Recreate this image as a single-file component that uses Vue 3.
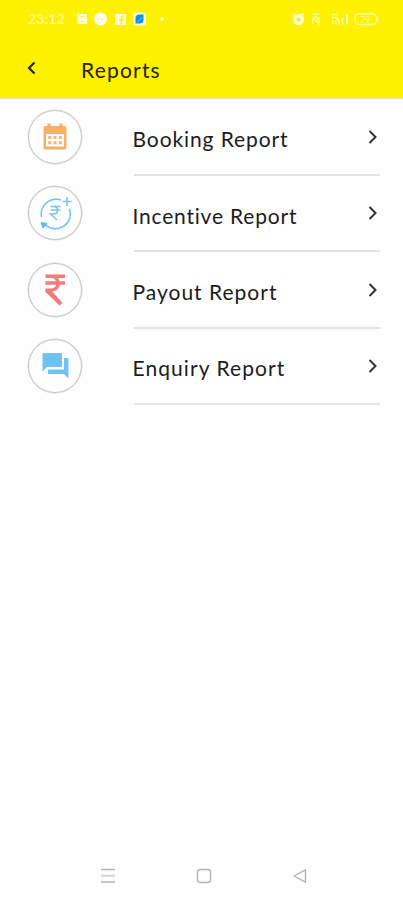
<script setup>
const reports = [
  { label: 'Booking Report', icon: 'calendar', spacing: '0.9px' },
  { label: 'Incentive Report', icon: 'incentive', spacing: '0.8px' },
  { label: 'Payout Report', icon: 'rupee', spacing: '1px' },
  { label: 'Enquiry Report', icon: 'chat', spacing: '1.08px' },
]
</script>

<template>
  <div class="screen">
    <header class="top">
      <div class="status">
        <span class="time">23:12</span>
        <div class="left-icons">
          <svg width="90" height="16" viewBox="0 0 90 16">
            <path d="M1 3h10v10H1z" fill="#fffde0" />
            <path d="M3 5.5h6M4 8h1.500M7 8h1.500M5 10.500h3" stroke="#fff05a" stroke-width="1.200" />
            <circle cx="24.500" cy="8" r="6.500" fill="#fffef0" />
            <path d="M21.500 8h1.500M25.500 8h1.500" stroke="#ffed62" stroke-width="1.500" />
            <rect x="39" y="3" width="11" height="11" rx="1.500" fill="#fffde0" />
            <path d="M45.500 14V6.500q0-1.500 2-1.500M43 9h5" fill="none" stroke="#fff200" stroke-width="1.700" />
            <rect x="57" y="1.500" width="13" height="13" rx="3" fill="#f4fbdd" />
            <path d="M59.500 12V7q0-3.500 4-3.500h4V9q0 3.500-4 3.500h-4z" fill="#168de0" />
            <path d="M61 11q3-1 5-5" stroke="#49bafa" fill="none" />
            <circle cx="86" cy="8" r="1.800" fill="#fffde0" />
          </svg>
        </div>
        <div class="right-icons">
          <svg width="90" height="16" viewBox="0 0 90 16">
            <circle cx="8.500" cy="8.500" r="3.800" fill="none" stroke="#fffde0" stroke-width="3.400" />
            <path d="M3.500 4l2-1.500M13.500 4l-2-1.500" fill="none" stroke="#fffde0" stroke-width="1.300" />
            <path d="M22.500 3h7M23 13V6l6 7V6M25 5l4 4" fill="none" stroke="#fffb9b" stroke-width="1.300" />
            <path d="M42 3.500h5M42 6.500h4l3 3v4M43 9v4M46 9v4M52.500 7v6.500" fill="none" stroke="#fffb9b" stroke-width="1.500" />
            <path d="M57 3v10.500" stroke="#fffcbf" stroke-width="2" />
            <rect x="65" y="3" width="21.500" height="10.500" rx="3.500" fill="none" stroke="#fffb91" stroke-width="1.300" />
            <path d="M87.800 6.500v3.500" stroke="#fffb91" stroke-width="1.200" />
            <text x="70" y="11.500" class="battery">79</text>
          </svg>
        </div>
      </div>
      <div class="bar">
        <svg class="back" width="10" height="14" viewBox="0 0 10 14">
          <path d="M8.500 1.500L3 7l5.500 5.500" fill="none" stroke="#252300" stroke-width="2.200" />
        </svg>
        <h1>Reports</h1>
      </div>
    </header>

    <main>
      <div v-for="r in reports" :key="r.label" class="row">
        <div class="badge">
          <svg v-if="r.icon === 'calendar'" width="36" height="36" viewBox="0 0 36 36">
            <path fill="#f9ae67" fill-rule="evenodd" d="M8.500 7h2V4.500h3V7h9V4.500h3V7h2q2 0 2 2v19.500q0 2-2 2h-19q-2 0-2-2V9q0-2 2-2zM9 15v12.500h18V15z" />
            <path d="M11.200 18.500h13.600M11.200 23.700h13.600" stroke="#f6b77f" stroke-width="3" stroke-dasharray="3 2.300" />
          </svg>
          <svg v-else-if="r.icon === 'incentive'" width="36" height="36" viewBox="0 0 36 36" fill="none" stroke="#7cc5f0">
            <path d="M4.500 22A15 15 0 0 1 24 5M32.500 13.500A15 15 0 0 1 8 29.500" stroke-width="1.600" />
            <path d="M30 2v9M25.500 6.500h9" stroke-width="1.600" />
            <path d="M4 27.500l6 1-4 4.500z" fill="#5cb9ef" stroke="#5cb9ef" />
            <path d="M13.500 11.500h10M13.500 15h10M13.500 11.500h3c5.500 0 5.500 7.500 0 7.500h-3l6.500 6" stroke-width="1.600" />
          </svg>
          <svg v-else-if="r.icon === 'rupee'" width="36" height="36" viewBox="0 0 36 36">
            <path d="M8.500 4.300H28M8.500 11H28M9 4.300h4.500c10 0 10 14 0 14H8.500" fill="none" stroke="#f37b7b" stroke-width="3.600" />
            <path d="M8.500 18h5.500L25.500 31l-3 2.500L8.500 20z" fill="#f37b7b" />
          </svg>
          <svg v-else width="36" height="36" viewBox="0 0 36 36">
            <path fill="#70c2f5" d="M6.500 5H24q1 0 1 1v12q0 1-1 1H10l-4.500 4.500V6q0-1 1-1zM27 10h3.500q1 0 1 1v19.500L27 26H12q-1 0-1-1v-3.500h16z" />
          </svg>
        </div>
        <div class="content">
          <span class="label" :style="{ letterSpacing: r.spacing }">{{ r.label }}</span>
          <svg class="chevron" width="12" height="16" viewBox="0 0 12 16">
            <path d="M2.500 2L8.500 8l-6 6" fill="none" stroke="#333" stroke-width="2" />
          </svg>
        </div>
      </div>
    </main>

    <nav>
      <svg width="16" height="16" viewBox="0 0 16 16"><path d="M1 1.500h14M1 14h14" stroke="#b4b4b4" stroke-width="1.500" /><path d="M1 7.800h14" stroke="#d0d0d0" stroke-width="1.800" /></svg>
      <svg width="16" height="16" viewBox="0 0 16 16"><rect x="1.500" y="1.500" width="13" height="13" rx="2.500" fill="none" stroke="#b4b4b4" stroke-width="1.400" /></svg>
      <svg width="16" height="16" viewBox="0 0 16 16"><path d="M13.500 1.800v12.400L2 8z" fill="none" stroke="#b4b4b4" stroke-width="1.400" stroke-linejoin="round" /></svg>
    </nav>
  </div>
</template>

<style>
body { background: #fefefe; }
</style>

<style scoped>
.screen {
  width: 403px;
  height: 900px;
  display: flex;
  flex-direction: column;
  overflow: hidden;
  background: #fefefe;
  font-family: Lato, sans-serif;
  color: #1c1c1c;
}
.top {
  flex: none;
  height: 98px;
  background: #fff200;
  box-shadow: 0 1px 1px #e2dfb0;
}
.status {
  height: 37px;
  display: flex;
  align-items: center;
  padding-left: 28px;
}
.time {
  width: 48px;
  font-size: 14px;
  letter-spacing: 0.2px;
  color: #fffbac;
}
.left-icons, .right-icons { height: 16px; }
.right-icons { margin-left: 124px; }
.left-icons svg, .right-icons svg { display: block; }
.battery { font: 9px Lato, sans-serif; fill: #fffb91; }
.bar {
  height: 61px;
  display: flex;
  align-items: flex-start;
  padding-left: 26px;
}
.back { flex: none; margin-top: 24px; }
h1 {
  margin: 20px 0 0 45px;
  font-size: 21px;
  line-height: 26px;
  font-weight: 400;
  letter-spacing: 1.200px;
  color: #252300;
}
main { padding-top: 1.600px; }
.row {
  height: 76.400px;
  display: flex;
  align-items: center;
  padding: 0 23px 0 28px;
}
.badge {
  flex: none;
  box-sizing: border-box;
  width: 54px;
  height: 54px;
  margin-bottom: 1.600px;
  border: 1px solid #c6c4c4;
  box-shadow: 0 0 0 0.500px #d8d6d6;
  border-radius: 50%;
  display: flex;
  align-items: center;
  justify-content: center;
}
.content {
  flex: 1;
  box-sizing: border-box;
  height: 100%;
  margin-left: 52px;
  border-bottom: 2px solid #e4e4e4;
  display: flex;
  align-items: center;
  justify-content: space-between;
}
.label {
  font-size: 21px;
  line-height: 26px;
  white-space: nowrap;
  padding-top: 5px;
  margin-left: -1.500px;
}
.chevron { margin-right: 1px; }
nav {
  margin-top: auto;
  height: 48px;
  display: flex;
  align-items: center;
  justify-content: space-between;
  padding: 0 95px 0 100px;
}
</style>
